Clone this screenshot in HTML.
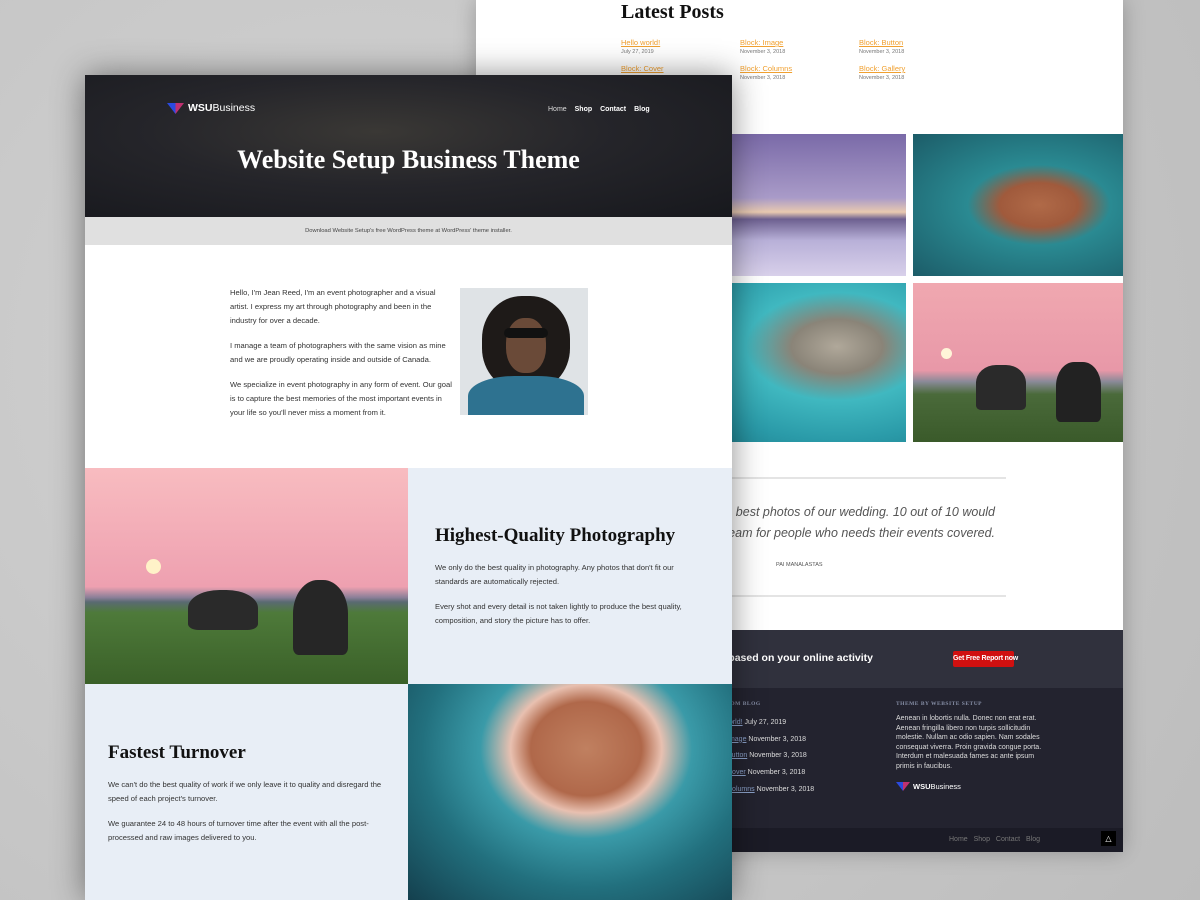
<!DOCTYPE html>
<html><head><meta charset="utf-8"><style>
*{margin:0;padding:0;box-sizing:border-box}
body{width:1200px;height:900px;overflow:hidden;background:#c8c8c8;background-image:radial-gradient(circle at 30% 40%,#d2d2d2,#bdbdbd);font-family:"Liberation Sans",sans-serif;position:relative}
.a{position:absolute}
.serif{font-family:"Liberation Serif",serif;font-weight:bold}
.back{left:476px;top:0;width:647px;height:852px;background:#fff;box-shadow:0 0 20px rgba(0,0,0,.25)}
.front{left:85px;top:75px;width:647px;height:825px;background:#fff;box-shadow:0 0 30px rgba(0,0,0,.45);z-index:5}
.lk{color:#f0a030;text-decoration:underline;font-size:7.5px}
.dt{color:#777;font-size:5.5px;margin-top:2px}
p.t{font-size:7.6px;color:#333;line-height:14px}
.flk{color:#8aa0c8;text-decoration:underline}
</style></head><body>
<div class="a back">
 <div class="a serif" style="left:145px;top:1px;font-size:20px;color:#111">Latest Posts</div>
 <div class="a" style="left:145px;top:38px"><div class="lk">Hello world!</div><div class="dt">July 27, 2019</div></div>
 <div class="a" style="left:264px;top:38px"><div class="lk">Block: Image</div><div class="dt">November 3, 2018</div></div>
 <div class="a" style="left:383px;top:38px"><div class="lk">Block: Button</div><div class="dt">November 3, 2018</div></div>
 <div class="a" style="left:145px;top:64px"><div class="lk">Block: Cover</div><div class="dt">November 3, 2018</div></div>
 <div class="a" style="left:264px;top:64px"><div class="lk">Block: Columns</div><div class="dt">November 3, 2018</div></div>
 <div class="a" style="left:383px;top:64px"><div class="lk">Block: Gallery</div><div class="dt">November 3, 2018</div></div>
 <div class="a" style="left:200px;top:134px;width:230px;height:142px;background:linear-gradient(180deg,#7a6aa8 0%,#a99bc8 45%,#e8c9b0 55%,#6d6090 60%,#b8b0d8 75%,#d8d0ea 100%)"></div>
 <div class="a" style="left:437px;top:134px;width:210px;height:142px;background:radial-gradient(ellipse at 60% 50%,#b06a48 0%,#a05a3c 22%,#2a8a92 40%,#1c5c68 100%)"></div>
 <div class="a" style="left:200px;top:283px;width:230px;height:159px;background:radial-gradient(ellipse at 70% 40%,#b0a89a 0%,#8a8478 20%,#40b8c0 40%,#2a9aa8 70%,#1d7a88 100%)"></div>
 <div class="a" style="left:437px;top:283px;width:210px;height:159px;background:linear-gradient(180deg,#f0a8b0 0%,#e898a8 55%,#8a8a98 62%,#4a6a3a 70%,#3a5a2a 100%)"></div>
 <div class="a" style="left:465px;top:348px;width:11px;height:11px;border-radius:50%;background:#fff4d8"></div>
 <div class="a" style="left:500px;top:365px;width:50px;height:45px;background:#2a2a2a;border-radius:40% 40% 10% 10%"></div>
 <div class="a" style="left:580px;top:362px;width:45px;height:60px;background:#222;border-radius:40% 40% 10% 10%"></div>
 <div class="a" style="left:160px;top:477px;width:370px;height:2px;background:#e4e4e4"></div>
 <div class="a" style="left:160px;top:595px;width:370px;height:2px;background:#e4e4e4"></div>
 <div class="a" style="right:128px;top:502px;font-size:12.5px;color:#555;font-style:italic;line-height:21px;text-align:right;white-space:nowrap">They took the best photos of our wedding. 10 out of 10 would<br>recommend the team for people who needs their events covered.</div>
 <div class="a" style="left:300px;top:562px;font-size:5.5px;color:#555">PAI MANALASTAS</div>
 <div class="a" style="left:0;top:630px;width:647px;height:58px;background:#30313d"></div>
 <div class="a" style="right:250px;top:652px;font-size:10.5px;color:#fff;font-weight:bold;white-space:nowrap">Get a free report based on your online activity</div>
 <div class="a" style="left:477px;top:651px;width:61px;height:16px;background:#d01010;border-radius:2px;color:#fff;font-size:7px;font-weight:bold;text-align:center;line-height:16px;white-space:nowrap;letter-spacing:-.2px">Get Free Report now</div>
 <div class="a" style="left:0;top:688px;width:647px;height:140px;background:#23232f"></div>
 <div class="a serif" style="left:220px;top:701px;font-size:5.5px;color:#8890a8;letter-spacing:.5px">LATEST FROM BLOG</div>
 <div class="a" style="left:230px;top:715px;font-size:7px;color:#ddd;line-height:16.7px">
  <span class="flk">Hello world!</span> July 27, 2019<br><span class="flk">Block: Image</span> November 3, 2018<br><span class="flk">Block: Button</span> November 3, 2018<br><span class="flk">Block: Cover</span> November 3, 2018<br><span class="flk">Block: Columns</span> November 3, 2018</div>
 <div class="a serif" style="left:420px;top:701px;font-size:5.5px;color:#8890a8;letter-spacing:.5px">THEME BY WEBSITE SETUP</div>
 <div class="a" style="left:420px;top:714px;width:150px;font-size:7px;color:#ddd;line-height:9.6px">Aenean in lobortis nulla. Donec non erat erat. Aenean fringilla libero non turpis sollicitudin molestie. Nullam ac odio sapien. Nam sodales consequat viverra. Proin gravida congue porta. Interdum et malesuada fames ac ante ipsum primis in faucibus.</div>
 <svg class="a" style="left:420px;top:782px" width="14" height="9"><polygon points="0,0 7,0 7,9" fill="#2a4ae0"/><polygon points="7,0 14,0 7,9" fill="#c03070"/></svg>
 <div class="a" style="left:437px;top:782px;font-size:7.5px;color:#fff"><b>WSU</b>Business</div>
 <div class="a" style="left:0;top:828px;width:647px;height:24px;background:#1b1b26"></div>
 <div class="a" style="left:473px;top:836px;font-size:7px;color:#777;word-spacing:4px">Home Shop Contact Blog</div>
 <div class="a" style="left:625px;top:831px;width:15px;height:15px;background:#000;color:#fff;font-size:8px;text-align:center;line-height:15px">&#9651;</div>
</div>

<div class="a front">
 <div class="a" style="left:0;top:0;width:647px;height:142px;background:radial-gradient(ellipse at 45% 40%,#3a3835 0%,#25252a 45%,#17181d 100%)"></div>
 <svg class="a" style="left:82px;top:28px" width="17" height="11"><polygon points="0,0 8.5,0 8.5,11" fill="#2a4ae0"/><polygon points="8.5,0 17,0 8.5,11" fill="#c03070"/></svg>
 <div class="a" style="left:103px;top:27px;font-size:10.5px;color:#fff"><b>WSU</b>Business</div>
 <div class="a" style="left:463px;top:31px;font-size:7px;color:#fff;font-weight:bold;word-spacing:6px"><span style="font-weight:normal;color:#ddd">Home</span> Shop Contact Blog</div>
 <div class="a serif" style="left:0;top:70px;width:647px;text-align:center;font-size:26px;color:#fff">Website Setup Business Theme</div>
 <div class="a" style="left:0;top:142px;width:647px;height:28px;background:#e0e0e0;font-size:5.8px;color:#444;text-align:center;line-height:28px">Download Website Setup's free WordPress theme at WordPress' theme installer.</div>
 <div class="a" style="left:145px;top:211px;width:224px">
  <p class="t">Hello, I'm Jean Reed, I'm an event photographer and a visual artist. I express my art through photography and been in the industry for over a decade.</p>
  <p class="t" style="margin-top:11px">I manage a team of photographers with the same vision as mine and we are proudly operating inside and outside of Canada.</p>
  <p class="t" style="margin-top:11px">We specialize in event photography in any form of event. Our goal is to capture the best memories of the most important events in your life so you'll never miss a moment from it.</p>
 </div>
 <div class="a" style="left:375px;top:213px;width:128px;height:127px;background:#dfe3e6;overflow:hidden">
  <div class="a" style="left:22px;top:8px;width:88px;height:95px;border-radius:45%;background:#1e1a18"></div>
  <div class="a" style="left:46px;top:30px;width:40px;height:55px;border-radius:45%;background:#6a4a38"></div>
  <div class="a" style="left:44px;top:40px;width:44px;height:10px;background:#111;border-radius:5px"></div>
  <div class="a" style="left:8px;top:88px;width:116px;height:50px;border-radius:40% 40% 0 0;background:#2e7290"></div>
 </div>
 <div class="a" style="left:0;top:393px;width:323px;height:216px;background:linear-gradient(180deg,#f8bcc0 0%,#eea0b0 55%,#8a7f98 60%,#5a6a72 62%,#4e7a3a 67%,#3a6028 100%)"></div>
 <div class="a" style="left:61px;top:484px;width:15px;height:15px;border-radius:50%;background:#fff2c8"></div>
 <div class="a" style="left:103px;top:515px;width:70px;height:40px;background:#2a2a2a;border-radius:45% 45% 15% 15%"></div>
 <div class="a" style="left:208px;top:505px;width:55px;height:75px;background:#262626;border-radius:45% 45% 10% 10%"></div>
 <div class="a" style="left:323px;top:393px;width:324px;height:216px;background:#e8eef6"></div>
 <div class="a serif" style="left:350px;top:450px;font-size:19px;color:#111">Highest-Quality Photography</div>
 <div class="a" style="left:350px;top:486px;width:270px">
  <p class="t">We only do the best quality in photography. Any photos that don't fit our standards are automatically rejected.</p>
  <p class="t" style="margin-top:11px">Every shot and every detail is not taken lightly to produce the best quality, composition, and story the picture has to offer.</p>
 </div>
 <div class="a" style="left:0;top:609px;width:323px;height:216px;background:#e8eef6"></div>
 <div class="a serif" style="left:23px;top:667px;font-size:19px;color:#111">Fastest Turnover</div>
 <div class="a" style="left:23px;top:703px;width:280px">
  <p class="t">We can't do the best quality of work if we only leave it to quality and disregard the speed of each project's turnover.</p>
  <p class="t" style="margin-top:11px">We guarantee 24 to 48 hours of turnover time after the event with all the post-processed and raw images delivered to you.</p>
 </div>
 <div class="a" style="left:323px;top:609px;width:324px;height:216px;background:radial-gradient(ellipse at 55% 30%,#c08060 0%,#b0684a 22%,#e8c0b0 30%,#3a9aa8 42%,#22707e 65%,#14404e 100%)"></div>
</div>
</body></html>
